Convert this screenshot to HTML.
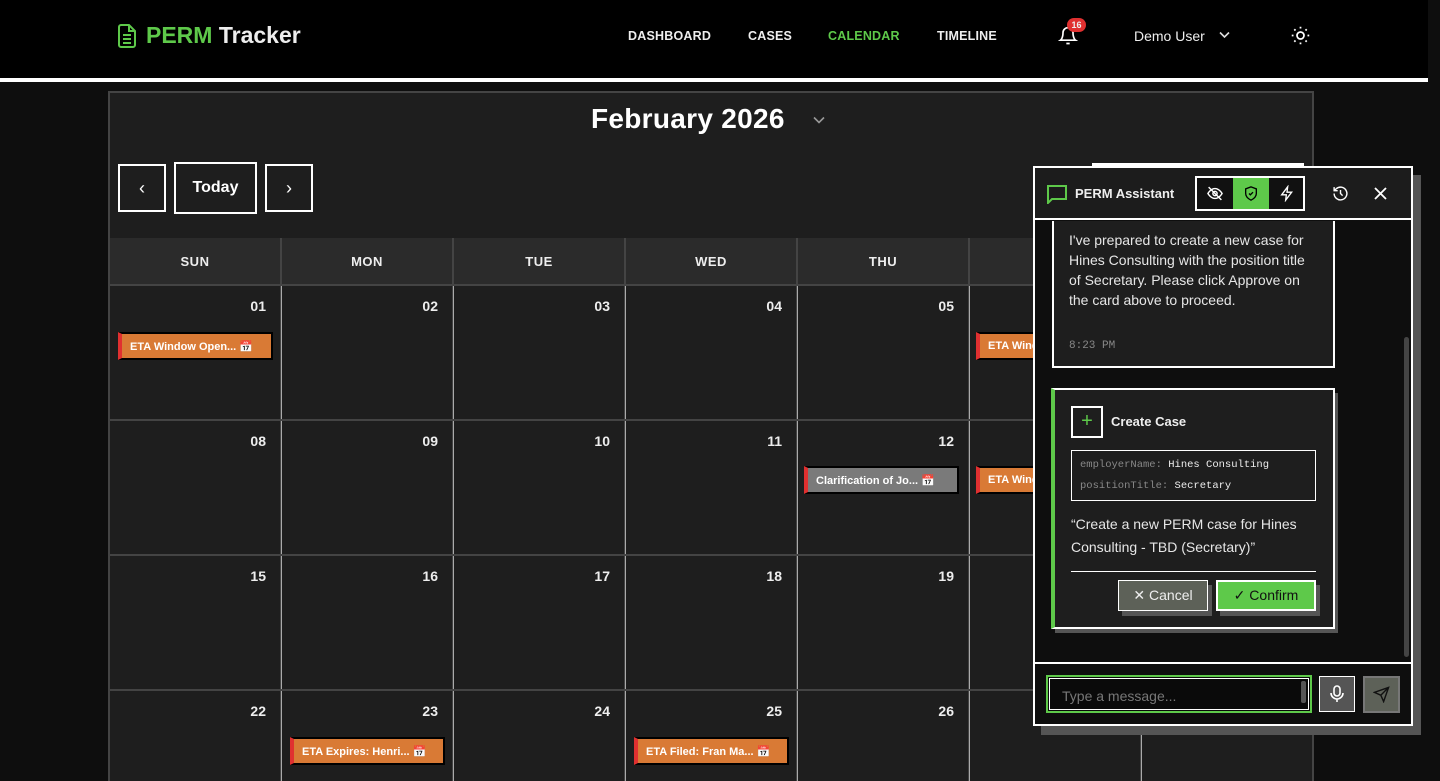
<!DOCTYPE html>
<html style="width:1440px;height:781px;overflow:hidden"><head><meta charset="utf-8"><style>
*{box-sizing:border-box;margin:0;padding:0}
body{width:1440px;height:781px;overflow:hidden;background:#0e0e0e;font-family:"Liberation Sans",sans-serif;color:#eee;position:relative}
.a{position:absolute}
.hdr{left:0;top:0;width:1428px;height:78px;background:#000}
.wl{left:0;top:78px;width:1428px;height:4px;background:#fff}
.nav{top:29px;font-size:12.5px;font-weight:bold;letter-spacing:.2px;color:#eee}
.cal{left:108px;top:91px;width:1206px;height:690px;border:2px solid #444;border-bottom:none;background:#1e1e1e}
.btn{border:2px solid #fff;background:#1e1e1e;display:flex;align-items:center;justify-content:center;color:#fff}
.dh{top:238px;height:46px;background:#2b2b2b;font-size:13px;font-weight:bold;display:flex;align-items:center;justify-content:center;letter-spacing:.5px}
.cell{background:#1e1e1e}
.num{font-size:14px;font-weight:bold;text-align:right;color:#eee}
.ev{height:28px;border:2px solid #000;border-left:4px solid #e03030;background:#d97a35;color:#fff;font-size:11px;font-weight:bold;padding:6px 0 0 8px;white-space:nowrap;overflow:hidden}
.ev.g{background:#7a7a7a}
.mono{font-family:"Liberation Mono",monospace}
</style></head><body>
<div class="a hdr"></div>
<div class="a wl"></div>
<svg class="a" style="left:117px;top:24px" width="20" height="24" viewBox="0 0 20 24" fill="none" stroke="#5ec94a" stroke-width="2"><path d="M2 3a2 2 0 0 1 2-2h8l6 6v14a2 2 0 0 1-2 2H4a2 2 0 0 1-2-2z"/><path d="M12 1v6h6M6 11h8M6 15h8M6 19h8"/></svg>
<div class="a" style="left:146px;top:22px;font-size:23px;font-weight:bold"><span style="color:#5ec94a">PERM</span> Tracker</div>
<div class="a nav" style="left:628px">DASHBOARD</div>
<div class="a nav" style="left:748px">CASES</div>
<div class="a nav" style="left:828px;color:#5ec94a">CALENDAR</div>
<div class="a nav" style="left:937px">TIMELINE</div>
<svg class="a" style="left:1058px;top:25px" width="20" height="22" viewBox="0 0 24 24" fill="none" stroke="#fff" stroke-width="2"><path d="M6 8a6 6 0 0 1 12 0c0 7 3 9 3 9H3s3-2 3-9M10 21h4"/></svg>
<div class="a" style="left:1067px;top:18px;width:19px;height:14px;border-radius:7px;background:#e03030;font-size:9px;font-weight:bold;text-align:center;line-height:14px">16</div>
<div class="a" style="left:1134px;top:28px;font-size:14px">Demo User</div>
<svg class="a" style="left:1219px;top:31px" width="11" height="8" viewBox="0 0 11 8" fill="none" stroke="#ddd" stroke-width="1.6"><path d="M1 1.5l4.5 4.5 4.5-4.5"/></svg>
<svg class="a" style="left:1290px;top:25px" width="21" height="21" viewBox="0 0 24 24" fill="none" stroke="#fff" stroke-width="2"><circle cx="12" cy="12" r="4"/><path d="M12 2v2M12 20v2M4.9 4.9l1.4 1.4M17.7 17.7l1.4 1.4M2 12h2M20 12h2M4.9 19.1l1.4-1.4M17.7 6.3l1.4-1.4"/></svg>

<div class="a cal"></div>
<div class="a" style="left:591px;top:103px;font-size:28px;font-weight:bold;color:#fff;letter-spacing:.3px">February 2026</div>
<svg class="a" style="left:813px;top:116px" width="12" height="8" viewBox="0 0 12 8" fill="none" stroke="#999" stroke-width="1.6"><path d="M1 1.5l5 5 5-5"/></svg>
<div class="a btn" style="left:118px;top:164px;width:48px;height:48px;font-size:18px">‹</div>
<div class="a btn" style="left:174px;top:162px;width:83px;height:52px;font-size:16px;font-weight:bold">Today</div>
<div class="a btn" style="left:265px;top:164px;width:48px;height:48px;font-size:18px">›</div>
<div class="a" style="left:1092px;top:163px;width:212px;height:4px;background:#fff"></div>

<div class="a" style="left:110px;top:284px;width:1202px;height:497px;background:#444"></div>
<div class="a dh" style="left:110px;width:170px">SUN</div>
<div class="a dh" style="left:282px;width:170px">MON</div>
<div class="a dh" style="left:454px;width:170px">TUE</div>
<div class="a dh" style="left:626px;width:170px">WED</div>
<div class="a dh" style="left:798px;width:170px">THU</div>
<div class="a dh" style="left:970px;width:170px">FRI</div>
<div class="a dh" style="left:1142px;width:170px">SAT</div>
<div class="a" style="left:280px;top:238px;width:2px;height:46px;background:#444"></div>
<div class="a" style="left:452px;top:238px;width:2px;height:46px;background:#444"></div>
<div class="a" style="left:624px;top:238px;width:2px;height:46px;background:#444"></div>
<div class="a" style="left:796px;top:238px;width:2px;height:46px;background:#444"></div>
<div class="a" style="left:968px;top:238px;width:2px;height:46px;background:#444"></div>
<div class="a" style="left:1140px;top:238px;width:2px;height:46px;background:#444"></div>
<div id="grid"></div>
<script>
var g='',tops=[286,421,556,691],lefts=[110,282,454,626,798,970,1142],nums=[["01","02","03","04","05","06","07"],["08","09","10","11","12","13","14"],["15","16","17","18","19","20","21"],["22","23","24","25","26","27","28"]];
for(var r=0;r<4;r++)for(var c=0;c<7;c++){var h=r==3?90:133;g+='<div class="a cell" style="left:'+lefts[c]+'px;top:'+tops[r]+'px;width:170px;height:'+h+'px"></div><div class="a num" style="left:'+lefts[c]+'px;top:'+(tops[r]+12)+'px;width:156px">'+nums[r][c]+'</div>';
if(c>0)g+='<div class="a" style="left:'+(lefts[c]-1)+'px;top:'+tops[r]+'px;width:1px;height:'+h+'px;background:#aaa"></div>';}
document.getElementById('grid').innerHTML=g;
</script>
<div class="a ev" style="left:118px;top:332px;width:155px">ETA Window Open... 📅</div>
<div class="a ev" style="left:976px;top:332px;width:80px">ETA Window</div>
<div class="a ev g" style="left:804px;top:466px;width:155px">Clarification of Jo... 📅</div>
<div class="a ev" style="left:976px;top:466px;width:80px">ETA Window</div>
<div class="a ev" style="left:290px;top:737px;width:155px">ETA Expires: Henri... 📅</div>
<div class="a ev" style="left:634px;top:737px;width:155px">ETA Filed: Fran Ma... 📅</div>

<div class="a" style="left:1041px;top:175px;width:380px;height:560px;background:#555"></div>
<div class="a" style="left:1033px;top:166px;width:380px;height:560px;border:2px solid #fff;background:#0e0e0e"></div>
<div class="a" style="left:1035px;top:168px;width:376px;height:52px;background:#1c1c1c;border-bottom:2px solid #fff"></div>
<svg class="a" style="left:1047px;top:185px" width="20" height="19" viewBox="0 0 20 19" fill="none" stroke="#5ec94a" stroke-width="2"><path d="M1 1h18v13H5l-4 4z"/></svg>
<div class="a" style="left:1075px;top:186px;font-size:13px;font-weight:bold">PERM Assistant</div>
<div class="a" style="left:1195px;top:176px;width:110px;height:35px;border:2px solid #fff;background:#111"></div>
<div class="a" style="left:1233px;top:178px;width:36px;height:31px;background:#5ec94a"></div>
<svg class="a" style="left:1206px;top:185px" width="18" height="17" viewBox="0 0 24 24" fill="none" stroke="#fff" stroke-width="2"><path d="M2 12s4-7 10-7 10 7 10 7-4 7-10 7S2 12 2 12z"/><circle cx="12" cy="12" r="3"/><path d="M3 3l18 18"/></svg>
<svg class="a" style="left:1243px;top:185px" width="16" height="17" viewBox="0 0 24 24" fill="none" stroke="#000" stroke-width="2"><path d="M12 2l8 3v7c0 5-4 8-8 10-4-2-8-5-8-10V5z"/><path d="M9 12l2 2 4-4"/></svg>
<svg class="a" style="left:1279px;top:185px" width="16" height="17" viewBox="0 0 24 24" fill="none" stroke="#fff" stroke-width="2"><path d="M13 2L4 14h7l-1 8 9-12h-7z"/></svg>
<svg class="a" style="left:1332px;top:185px" width="17" height="17" viewBox="0 0 24 24" fill="none" stroke="#fff" stroke-width="2"><path d="M3 12a9 9 0 1 0 3-6.7L3 8M3 3v5h5M12 7v5l3 3"/></svg>
<svg class="a" style="left:1374px;top:187px" width="13" height="13" viewBox="0 0 13 13" stroke="#fff" stroke-width="1.8"><path d="M1 1l11 11M12 1L1 12"/></svg>

<div class="a" style="left:1052px;top:221px;width:283px;height:147px;border:2px solid #fff;border-top:none;background:#1e1e1e"></div>
<div class="a" style="left:1069px;top:230px;width:240px;font-size:14px;line-height:20px;color:#e6e6e6">I've prepared to create a new case for Hines Consulting with the position title of Secretary. Please click Approve on the card above to proceed.</div>
<div class="a mono" style="left:1069px;top:340px;font-size:11px;color:#888">8:23 PM</div>

<div class="a" style="left:1055px;top:393px;width:283px;height:240px;background:#555"></div>
<div class="a" style="left:1051px;top:388px;width:284px;height:241px;border:2px solid #fff;border-left:4px solid #5ec94a;background:#1e1e1e"></div>
<div class="a" style="left:1071px;top:406px;width:32px;height:32px;border:2px solid #fff;color:#5ec94a;font-size:20px;text-align:center;line-height:26px">+</div>
<div class="a" style="left:1111px;top:414px;font-size:13px;font-weight:bold">Create Case</div>
<div class="a mono" style="left:1071px;top:450px;width:245px;height:51px;border:1.5px solid #fff;font-size:10.5px;line-height:21px;padding:4px 8px;color:#eee"><span style="color:#888">employerName:</span> Hines Consulting<br><span style="color:#888">positionTitle:</span> Secretary</div>
<div class="a" style="left:1071px;top:513px;width:260px;font-size:14px;line-height:23px;color:#e6e6e6">“Create a new PERM case for Hines Consulting - TBD (Secretary)”</div>
<div class="a" style="left:1071px;top:571px;width:245px;height:1px;background:#fff"></div>
<div class="a" style="left:1122px;top:585px;width:90px;height:31px;background:#555"></div>
<div class="a" style="left:1118px;top:580px;width:90px;height:31px;border:1.5px solid #fff;background:#5d6158;font-size:14px;text-align:center;line-height:28px">✕ Cancel</div>
<div class="a" style="left:1220px;top:585px;width:100px;height:31px;background:#555"></div>
<div class="a" style="left:1216px;top:580px;width:100px;height:31px;border:2px solid #fff;background:#5ec94a;color:#111;font-size:14px;text-align:center;line-height:27px">✓ Confirm</div>

<div class="a" style="left:1404px;top:337px;width:5px;height:320px;border-radius:3px;background:#444"></div>
<div class="a" style="left:1035px;top:662px;width:376px;height:2px;background:#fff"></div>
<div class="a" style="left:1046px;top:675px;width:266px;height:38px;border:2px solid #5ec94a;background:#0a0a0a"></div>
<div class="a" style="left:1049px;top:678px;width:260px;height:32px;border:1px solid #fff"></div>
<div class="a" style="left:1062px;top:688px;font-size:14px;color:#777">Type a message...</div>
<div class="a" style="left:1301px;top:681px;width:5px;height:22px;border-radius:2px;background:#555"></div>
<div class="a" style="left:1319px;top:676px;width:36px;height:36px;border:1.5px solid #fff;background:#555"></div>
<svg class="a" style="left:1330px;top:685px" width="14" height="18" viewBox="0 0 14 18" fill="none" stroke="#fff" stroke-width="1.6"><rect x="4" y="1" width="6" height="10" rx="3"/><path d="M1 8a6 6 0 0 0 12 0M7 14v3"/></svg>
<div class="a" style="left:1363px;top:676px;width:37px;height:37px;border:2px solid #777;background:#5d6158"></div>
<svg class="a" style="left:1373px;top:686px" width="17" height="17" viewBox="0 0 24 24" fill="none" stroke="#111" stroke-width="2"><path d="M22 2L11 13M22 2l-7 20-4-9-9-4z"/></svg>
</body></html>
